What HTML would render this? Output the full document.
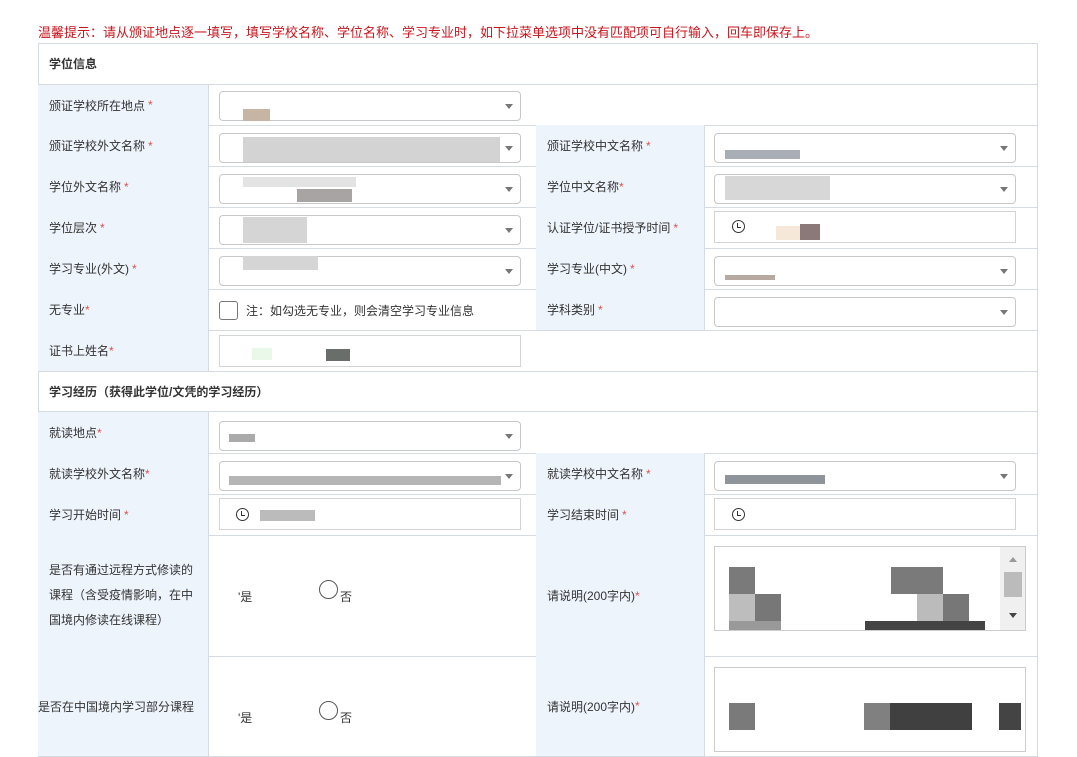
<!DOCTYPE html><html><head><meta charset="utf-8"><style>
body{margin:0;width:1077px;height:757px;background:#fff;position:relative;overflow:hidden;font-family:"Liberation Sans","Noto Sans CJK SC",sans-serif;font-size:12px;color:#333}
div{position:absolute;box-sizing:border-box}
.tip{left:38px;top:22px;color:#c8161d;font-size:13px;white-space:nowrap}
.lb{background:#eef4fc;border-right:1px solid #d6dbe2;border-bottom:1px solid #d6dbe2;padding-left:11px;display:flex;align-items:center}
.cl{border-bottom:1px solid #d6dbe2;border-right:1px solid #d6dbe2}
.s{color:#d9534f;margin-left:3px}
.sel{border:1px solid #c8c8c8;border-radius:4px;background:#fff;height:30px}
.sel:after{content:"";position:absolute;right:7px;top:12px;border-left:4px solid transparent;border-right:4px solid transparent;border-top:5px solid #777}
.inp{border:1px solid #d4d4d4;background:#fff;height:32px}
.clk{width:13px;height:13px;border:1.5px solid #333;border-radius:50%}
.clk:after{content:"";position:absolute;left:4px;top:1.5px;width:3px;height:4px;border-left:1.5px solid #333;border-bottom:1.5px solid #333}
.h{font-weight:bold;padding-left:11px;display:flex;align-items:center;border-bottom:1px solid #d6dbe2}
.g{background:#c9c9c9}
.rd{width:19px;height:19px;border:1px solid #555;border-radius:50%}
</style></head><body>
<div class="tip">温馨提示：请从颁证地点逐一填写，填写学校名称、学位名称、学习专业时，如下拉菜单选项中没有匹配项可自行输入，回车即保存上。</div>
<div style="left:38px;top:43px;width:1000px;height:714px;border:1px solid #d6dbe2;border-bottom:none"></div>
<div class="h" style="left:38px;top:43px;width:1000px;height:42px">学位信息</div>
<div class="h" style="left:38px;top:371px;width:1000px;height:41px;border-top:1px solid #d6dbe2">学习经历（获得此学位/文凭的学习经历）</div>

<div class="lb" style="left:38px;top:85px;width:171px;height:41px">颁证学校所在地点<span class="s">*</span></div>
<div class="cl" style="left:208px;top:85px;width:830px;height:41px;border-right:none"></div>
<div class="sel" style="left:219px;top:91px;width:302px"></div><div class="g" style="left:243px;top:109px;width:27px;height:12px;background:#c7b5a4"></div>

<div class="lb" style="left:38px;top:125px;width:171px;height:42px">颁证学校外文名称<span class="s">*</span></div>
<div class="cl" style="left:208px;top:125px;width:329px;height:42px"></div>
<div class="lb" style="left:536px;top:125px;width:169px;height:42px">颁证学校中文名称<span class="s">*</span></div>
<div class="cl" style="left:704px;top:125px;width:334px;height:42px;border-right:none"></div>
<div class="sel" style="left:219px;top:133px;width:302px"></div><div class="g" style="left:243px;top:137px;width:257px;height:25px;background:#d3d3d3"></div>
<div class="sel" style="left:714px;top:133px;width:302px"></div><div class="g" style="left:725px;top:150px;width:75px;height:9px;background:#a9aeb6"></div>

<div class="lb" style="left:38px;top:166px;width:171px;height:42px">学位外文名称<span class="s">*</span></div>
<div class="cl" style="left:208px;top:166px;width:329px;height:42px"></div>
<div class="lb" style="left:536px;top:166px;width:169px;height:42px">学位中文名称<span class="s" style="margin:0">*</span></div>
<div class="cl" style="left:704px;top:166px;width:334px;height:42px;border-right:none"></div>
<div class="sel" style="left:219px;top:174px;width:302px"></div><div class="g" style="left:297px;top:189px;width:55px;height:13px;background:#a9a4a4"></div><div class="g" style="left:243px;top:177px;width:113px;height:10px;background:#e3e3e3"></div>
<div class="sel" style="left:714px;top:174px;width:302px"></div><div class="g" style="left:725px;top:176px;width:105px;height:24px;background:#d7d7d7"></div>

<div class="lb" style="left:38px;top:207px;width:171px;height:42px">学位层次<span class="s">*</span></div>
<div class="cl" style="left:208px;top:207px;width:329px;height:42px"></div>
<div class="lb" style="left:536px;top:207px;width:169px;height:42px">认证学位/证书授予时间<span class="s">*</span></div>
<div class="cl" style="left:704px;top:207px;width:334px;height:42px;border-right:none"></div>
<div class="sel" style="left:219px;top:215px;width:302px"></div><div class="g" style="left:243px;top:217px;width:64px;height:26px;background:#d5d5d5"></div>
<div class="inp" style="left:714px;top:211px;width:302px"></div><div class="clk" style="left:732px;top:220px"></div><div class="g" style="left:800px;top:224px;width:20px;height:16px;background:#8b7878"></div><div class="g" style="left:776px;top:226px;width:24px;height:14px;background:#f6e8d8"></div>

<div class="lb" style="left:38px;top:248px;width:171px;height:42px">学习专业(外文)<span class="s">*</span></div>
<div class="cl" style="left:208px;top:248px;width:329px;height:42px"></div>
<div class="lb" style="left:536px;top:248px;width:169px;height:42px">学习专业(中文)<span class="s">*</span></div>
<div class="cl" style="left:704px;top:248px;width:334px;height:42px;border-right:none"></div>
<div class="sel" style="left:219px;top:256px;width:302px"></div><div class="g" style="left:243px;top:256px;width:75px;height:14px;background:#d5d5d5"></div>
<div class="sel" style="left:714px;top:256px;width:302px"></div><div class="g" style="left:725px;top:275px;width:50px;height:5px;background:#b6a9a0"></div>

<div class="lb" style="left:38px;top:289px;width:171px;height:42px">无专业<span class="s" style="margin:0">*</span></div>
<div class="cl" style="left:208px;top:289px;width:329px;height:42px"></div>
<div style="left:219px;top:301px;width:19px;height:19px;border:1px solid #777;border-radius:3px"></div>
<div style="left:246px;top:302px;white-space:nowrap">注：如勾选无专业，则会清空学习专业信息</div>
<div class="lb" style="left:536px;top:289px;width:169px;height:42px">学科类别<span class="s">*</span></div>
<div class="cl" style="left:704px;top:289px;width:334px;height:42px;border-right:none"></div>
<div class="sel" style="left:714px;top:297px;width:302px"></div>

<div class="lb" style="left:38px;top:330px;width:171px;height:42px">证书上姓名<span class="s" style="margin:0">*</span></div>
<div class="cl" style="left:208px;top:330px;width:830px;height:42px;border-right:none;border-bottom:none"></div>
<div class="inp" style="left:219px;top:335px;width:302px"></div><div class="g" style="left:326px;top:349px;width:24px;height:12px;background:#6a6e6a"></div><div class="g" style="left:252px;top:348px;width:20px;height:12px;background:#eaf8ea"></div>

<div class="lb" style="left:38px;top:412px;width:171px;height:42px">就读地点<span class="s" style="margin:0">*</span></div>
<div class="cl" style="left:208px;top:412px;width:830px;height:42px;border-right:none"></div>
<div class="sel" style="left:219px;top:421px;width:302px"></div><div class="g" style="left:229px;top:434px;width:26px;height:8px;background:#aaa"></div>

<div class="lb" style="left:38px;top:453px;width:171px;height:42px">就读学校外文名称<span class="s" style="margin:0">*</span></div>
<div class="cl" style="left:208px;top:453px;width:329px;height:42px"></div>
<div class="lb" style="left:536px;top:453px;width:169px;height:42px">就读学校中文名称<span class="s">*</span></div>
<div class="cl" style="left:704px;top:453px;width:334px;height:42px;border-right:none"></div>
<div class="sel" style="left:219px;top:461px;width:302px"></div><div class="g" style="left:229px;top:476px;width:272px;height:9px;background:#b5b5b5"></div>
<div class="sel" style="left:714px;top:461px;width:302px"></div><div class="g" style="left:725px;top:475px;width:100px;height:9px;background:#8f939a"></div>

<div class="lb" style="left:38px;top:494px;width:171px;height:42px">学习开始时间<span class="s">*</span></div>
<div class="cl" style="left:208px;top:494px;width:329px;height:42px"></div>
<div class="lb" style="left:536px;top:494px;width:169px;height:42px">学习结束时间<span class="s">*</span></div>
<div class="cl" style="left:704px;top:494px;width:334px;height:42px;border-right:none"></div>
<div class="inp" style="left:219px;top:498px;width:302px"></div><div class="clk" style="left:236px;top:508px"></div><div class="g" style="left:260px;top:510px;width:55px;height:11px;background:#bbb"></div>
<div class="inp" style="left:714px;top:498px;width:302px"></div><div class="clk" style="left:732px;top:508px"></div>

<div class="lb" style="left:38px;top:535px;width:171px;height:122px;line-height:25px;padding-right:14px">是否有通过远程方式修读的课程（含受疫情影响，在中国境内修读在线课程）</div>
<div class="cl" style="left:208px;top:535px;width:329px;height:122px"></div>
<div style="left:238px;top:588px">'是</div><div class="rd" style="left:319px;top:580px"></div><div style="left:340px;top:588px">否</div>
<div class="lb" style="left:536px;top:535px;width:169px;height:122px">请说明(200字内)<span class="s" style="margin:0">*</span></div>
<div class="cl" style="left:704px;top:535px;width:334px;height:122px;border-right:none"></div>
<div style="left:714px;top:546px;width:312px;height:85px;border:1px solid #ccc;overflow:hidden">
<div style="left:14px;top:20px;width:26px;height:27px;background:#7a7a7a"></div><div style="left:14px;top:47px;width:26px;height:27px;background:#bdbdbd"></div><div style="left:40px;top:47px;width:26px;height:27px;background:#777"></div><div style="left:14px;top:74px;width:52px;height:10px;background:#999"></div>
<div style="left:176px;top:20px;width:52px;height:27px;background:#7a7a7a"></div><div style="left:202px;top:47px;width:26px;height:27px;background:#bbb"></div><div style="left:228px;top:47px;width:26px;height:27px;background:#777"></div><div style="left:150px;top:74px;width:120px;height:10px;background:#444"></div>
<div style="left:285px;top:0;width:26px;height:84px;background:#f0f0f0"></div><div style="left:289px;top:25px;width:18px;height:25px;background:#bbb"></div>
<div style="left:294px;top:10px;border-left:4px solid transparent;border-right:4px solid transparent;border-bottom:5px solid #999"></div>
<div style="left:294px;top:66px;border-left:4px solid transparent;border-right:4px solid transparent;border-top:5px solid #444"></div>
</div>

<div class="cl" style="left:38px;top:656px;width:171px;height:101px;background:#eef4fc;display:flex;align-items:center">是否在中国境内学习部分课程</div>
<div class="cl" style="left:208px;top:656px;width:329px;height:101px"></div>
<div style="left:238px;top:709px">'是</div><div class="rd" style="left:319px;top:701px"></div><div style="left:340px;top:709px">否</div>
<div class="lb" style="left:536px;top:656px;width:169px;height:101px">请说明(200字内)<span class="s" style="margin:0">*</span></div>
<div class="cl" style="left:704px;top:656px;width:334px;height:101px;border-right:none"></div>
<div style="left:714px;top:667px;width:312px;height:85px;border:1px solid #ccc;overflow:hidden">
<div style="left:14px;top:35px;width:26px;height:27px;background:#7a7a7a"></div><div style="left:149px;top:35px;width:26px;height:27px;background:#808080"></div><div style="left:175px;top:35px;width:82px;height:27px;background:#404040"></div><div style="left:284px;top:35px;width:22px;height:27px;background:#444"></div>
</div>
</body></html>
